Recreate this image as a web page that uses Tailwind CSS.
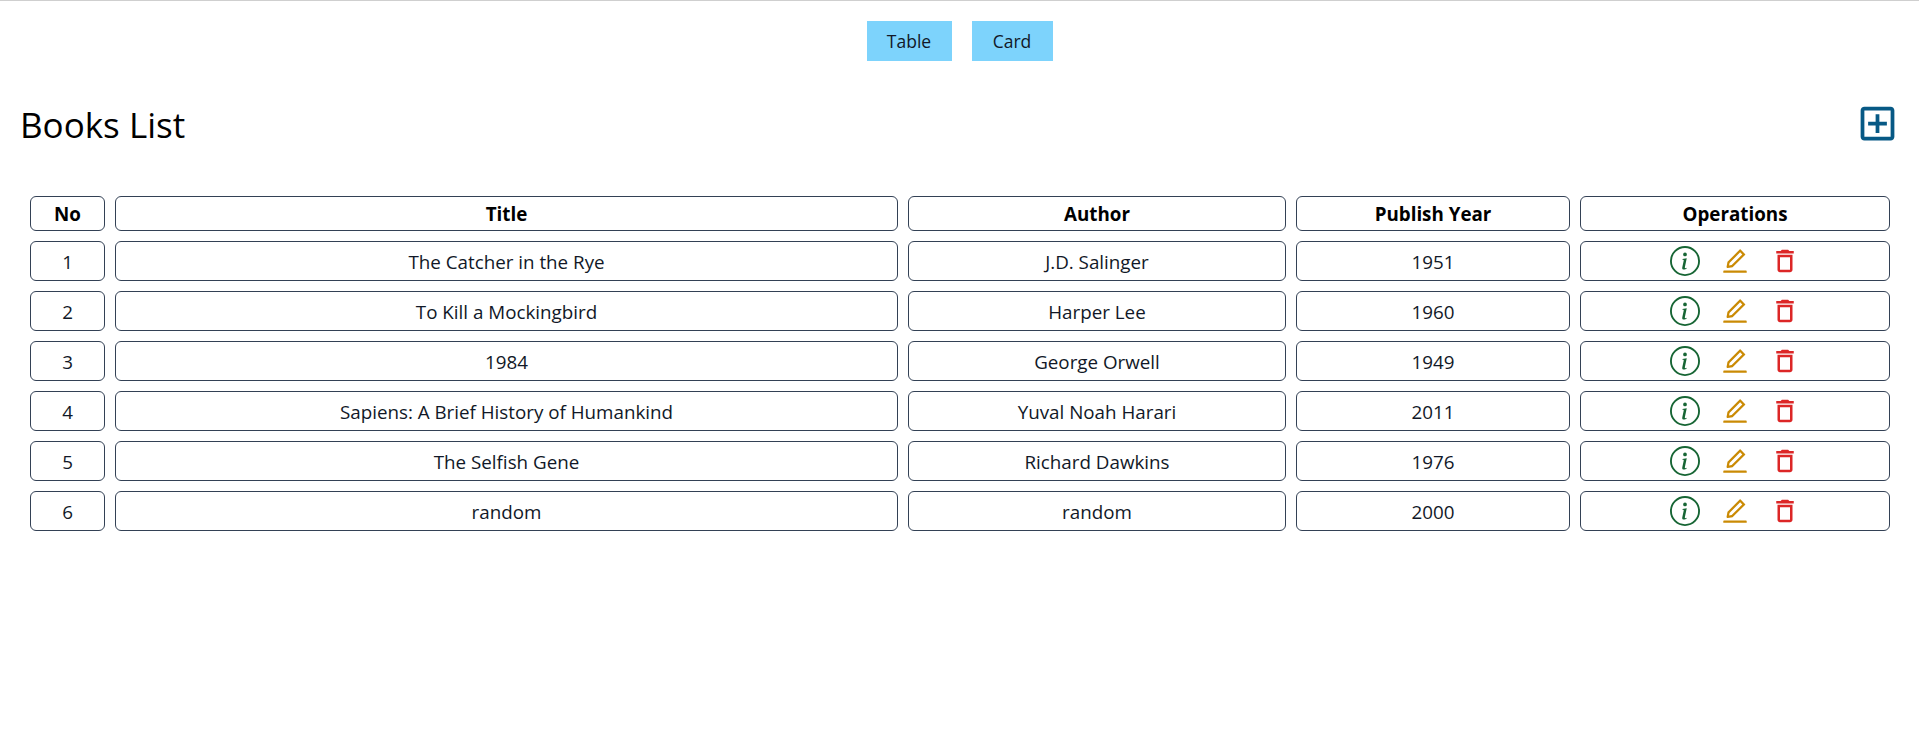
<!DOCTYPE html>
<html lang="en">
<head>
    <meta charset="UTF-8">
    <meta name="viewport" content="width=device-width, initial-scale=1.0">
    <title>Books List</title>
    <script src="https://cdn.jsdelivr.net/npm/@tailwindcss/browser@4"></script>
</head>
<body class="bg-white text-[#111827] border-t border-[#cfcfcf] font-['Open_Sans',sans-serif]">

    <!-- View toggle -->
    <div class="flex justify-center gap-5 pt-5">
        <button class="w-[85px] h-10 pt-px bg-[#7dd3fc] text-[17.5px]">Table</button>
        <button class="w-[81px] h-10 pt-px bg-[#7dd3fc] text-[17.5px]">Card</button>
    </div>

    <div class="pl-5 pr-[19px]">
        <!-- Heading -->
        <div class="flex items-center justify-between mt-10 mb-10 h-[45px]">
            <h1 class="text-[35px] pt-1 text-black">Books List</h1>
            <svg class="w-[45px] h-[45px] text-[#075985]" viewBox="0 0 24 24" fill="currentColor">
                <path d="M19 3H5c-1.11 0-2 .9-2 2v14c0 1.1.89 2 2 2h14c1.1 0 2-.9 2-2V5c0-1.1-.9-2-2-2zm0 16H5V5h14v14zm-8-2h2v-4h4v-2h-4V7h-2v4H7v2h4v4z"/>
            </svg>
        </div>

        <!-- Books table -->
        <table class="w-full table-fixed border-separate border-spacing-[10px] text-center text-[18.8px]">
            <colgroup>
                <col class="w-[75px]">
                <col class="w-[783px]">
                <col class="w-[378px]">
                <col class="w-[274px]">
                <col class="w-[310px]">
            </colgroup>
            <thead>
                <tr class="h-[35px] text-black">
                    <th class="border border-[#334155] rounded-md pt-[2px] font-bold">No</th>
                    <th class="border border-[#334155] rounded-md pt-[2px] font-bold">Title</th>
                    <th class="border border-[#334155] rounded-md pt-[2px] font-bold">Author</th>
                    <th class="border border-[#334155] rounded-md pt-[2px] font-bold">Publish Year</th>
                    <th class="border border-[#334155] rounded-md pt-[2px] font-bold">Operations</th>
                </tr>
            </thead>
            <tbody id="rows"></tbody>
        </table>
    </div>

    <template id="row">
        <tr class="h-10">
            <td class="border border-[#334155] rounded-md pt-[2px]"></td>
            <td class="border border-[#334155] rounded-md pt-[2px]"></td>
            <td class="border border-[#334155] rounded-md pt-[2px]"></td>
            <td class="border border-[#334155] rounded-md pt-[2px]"></td>
            <td class="border border-[#334155] rounded-md">
                <div class="flex justify-center gap-5">
                    <svg class="w-[30px] h-[30px] text-[#166534]" viewBox="0 0 16 16" fill="currentColor"><path d="M8 15A7 7 0 1 1 8 1a7 7 0 0 1 0 14zm0 1A8 8 0 1 0 8 0a8 8 0 0 0 0 16z"/><path d="m8.93 6.588-2.29.287-.082.38.45.083c.294.07.352.176.288.469l-.738 3.468c-.194.897.105 1.319.808 1.319.545 0 1.178-.252 1.465-.598l.088-.42c-.2.176-.492.246-.686.246-.275 0-.375-.193-.304-.533L8.93 6.588zM9 4.5a1 1 0 1 1-2 0 1 1 0 0 1 2 0z"/></svg>
                    <svg class="w-[30px] h-[30px] text-[#ca8a04]" viewBox="0 0 1024 1024" fill="currentColor"><path d="M257.7 752c2 0 4-.2 6-.5L431.9 722c2-.4 3.9-1.3 5.3-2.8l423.9-423.9a9.96 9.96 0 0 0 0-14.1L694.9 114.9c-1.9-1.9-4.4-2.9-7.1-2.9s-5.2 1-7.1 2.9L256.8 538.8c-1.5 1.5-2.4 3.3-2.8 5.3l-29.5 168.2a33.5 33.5 0 0 0 9.4 29.8c6.6 6.4 14.9 9.9 23.8 9.9zm67.4-174.4L687.8 215l73.3 73.3-362.7 362.6-88.9 15.7 15.6-89zM880 836H144c-17.7 0-32 14.3-32 32v36c0 4.4 3.6 8 8 8h784c4.4 0 8-3.6 8-8v-36c0-17.7-14.3-32-32-32z"/></svg>
                    <svg class="w-[30px] h-[30px] text-[#dc2626]" viewBox="0 0 24 24" fill="currentColor"><path d="M6 19c0 1.1.9 2 2 2h8c1.1 0 2-.9 2-2V7H6v12zM8 9h8v10H8V9zm7.5-5l-1-1h-5l-1 1H5v2h14V4h-3.5z"/></svg>
                </div>
            </td>
        </tr>
    </template>

    <script>
        const books = [
            ["The Catcher in the Rye", "J.D. Salinger", "1951"],
            ["To Kill a Mockingbird", "Harper Lee", "1960"],
            ["1984", "George Orwell", "1949"],
            ["Sapiens: A Brief History of Humankind", "Yuval Noah Harari", "2011"],
            ["The Selfish Gene", "Richard Dawkins", "1976"],
            ["random", "random", "2000"],
        ];

        const rows = document.getElementById("rows");
        const template = document.getElementById("row");
        books.forEach((book, i) => {
            const row = template.content.cloneNode(true);
            const cells = row.querySelectorAll("td");
            cells[0].textContent = i + 1;
            cells[1].textContent = book[0];
            cells[2].textContent = book[1];
            cells[3].textContent = book[2];
            rows.appendChild(row);
        });
    </script>

</body>
</html>
